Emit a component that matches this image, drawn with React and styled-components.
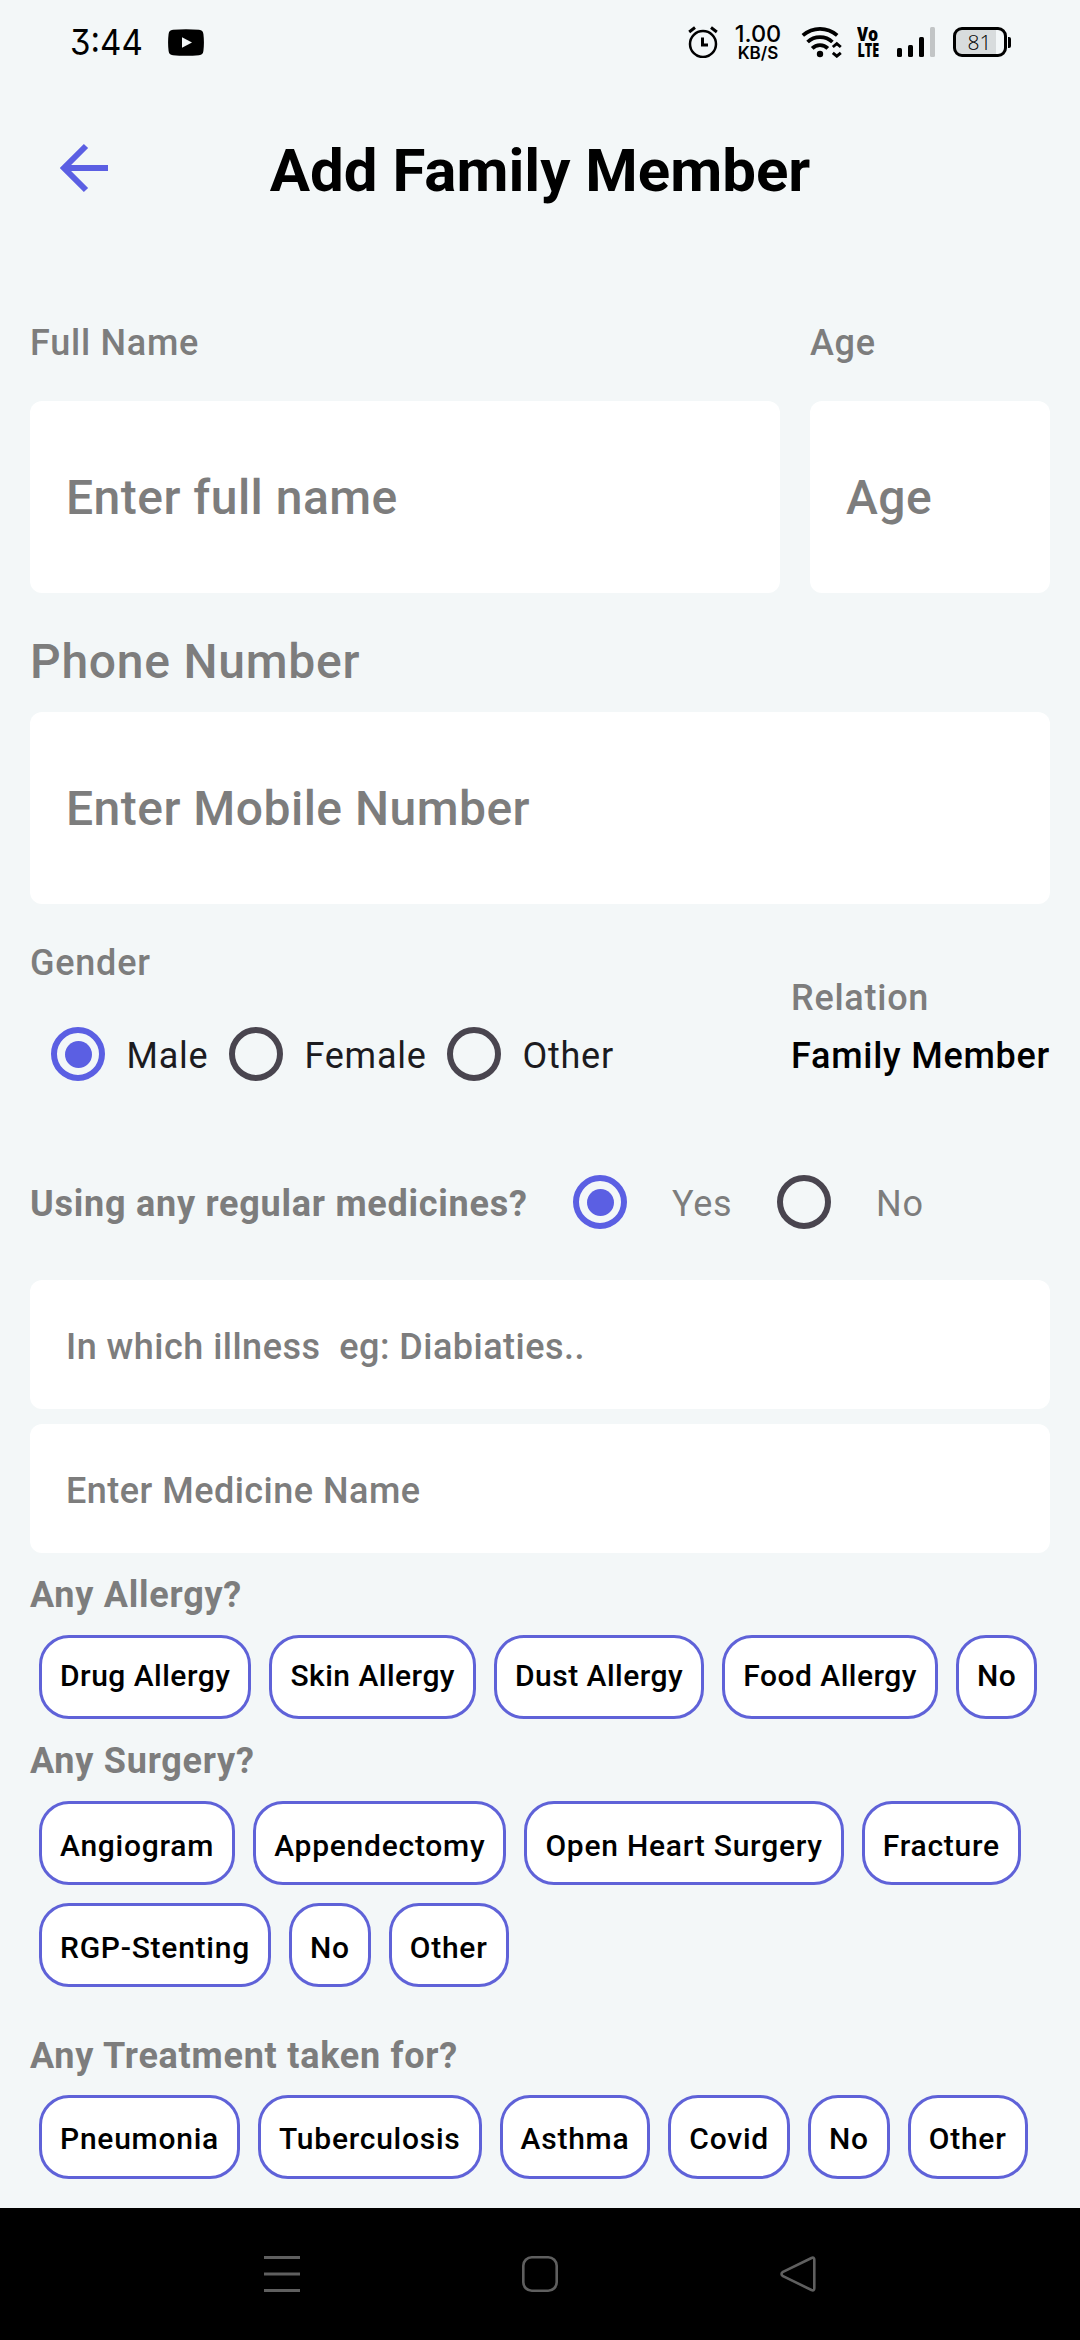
import React, { useState } from "react";
import styled, { createGlobalStyle } from "styled-components";

const ACCENT = "#5b5fe3";
const GREY = "#7d7d7d";

const Global = createGlobalStyle`
  *, *::before, *::after { box-sizing: border-box; }
  body { margin: 0; background: #f3f7f8; font-family: Roboto, "Noto Sans", sans-serif; }
  button, input { font: inherit; border: 0; padding: 0; margin: 0; background: none; }
`;

const Screen = styled.div`
  width: 1080px;
  height: 2340px;
  display: flex;
  flex-direction: column;
  background: #f3f7f8;
  overflow: hidden;
`;

const StatusBar = styled.header`
  height: 84px;
  flex: none;
  display: flex;
  justify-content: space-between;
  padding: 0 69px 0 70px;
`;
const StatusGroup = styled.div`
  display: flex;
  align-items: center;
`;
const Clock = styled.span`
  font: 400 36px/84px Inter, sans-serif;
  font-feature-settings: "cv09" 1;
  width: 98px;
  transform: scaleX(0.92);
  transform-origin: left;
`;
const Speed = styled.div`
  width: 50px;
  margin: 0 18px 0 15px;
  padding-top: 1px;
  display: flex;
  flex-direction: column;
  align-items: center;
  font: 550 23.5px/21px Inter, sans-serif;
  small { font: 600 17px/18px Inter, sans-serif; }
`;
const Volte = styled.div`
  width: 22px;
  margin: 0 18px 0 15px;
  display: flex;
  flex-direction: column;
  align-items: center;
  font: 800 19px/16px "Open Sans", sans-serif;
`;
const Squeeze = styled.span`
  transform: scaleX(${(p) => p.$x});
`;
const Battery = styled.div`
  display: flex;
  align-items: center;
  gap: 1px;
  margin-left: 18px;
  &::after {
    content: "";
    width: 3px;
    height: 11px;
    border-radius: 0 2px 2px 0;
    background: #000;
  }
`;
const BatteryShell = styled.div`
  width: 54px;
  height: 30px;
  border: 3px solid #000;
  border-radius: 9px;
  padding: 1px 1px 1px 0;
  background: linear-gradient(90deg, #d8dcdd 40px, transparent 40px);
  font: 350 21px/22px "Open Sans", sans-serif;
  text-align: center;
`;

const TopBar = styled.div`
  height: 170px;
  flex: none;
  display: grid;
  grid-template-columns: 1fr auto 1fr;
  align-items: center;
  padding: 0 57px;
`;
const BackButton = styled.button`
  width: 54px;
  height: 54px;
  margin-bottom: 2px;
  display: grid;
  place-items: center;
`;
const Title = styled.h1`
  margin: 0;
  padding-top: 3px;
  font-size: 60px;
  font-weight: 700;
  line-height: 70px;
`;

const Form = styled.main`
  flex: 1;
  padding: 63px 30px 0;
  display: flex;
  flex-direction: column;
`;
const Row = styled.div`
  display: flex;
  gap: 30px;
`;
const Field = styled.label`
  display: flex;
  flex-direction: column;
  flex: ${(p) => (p.$width ? "none" : "1")};
  width: ${(p) => (p.$width ? p.$width + "px" : "auto")};
`;
const Label = styled.span`
  color: ${GREY};
  font-size: ${(p) => (p.$large ? 48 : 36)}px;
  font-weight: ${(p) => (p.$bold ? 700 : 500)};
  line-height: ${(p) => (p.$large ? 56 : 42)}px;
  letter-spacing: 0.75px;
  margin-top: ${(p) => p.$top || 0}px;
  margin-bottom: ${(p) => p.$bottom || 0}px;
  white-space: nowrap;
`;
const Input = styled.input`
  width: 100%;
  height: ${(p) => (p.$compact ? 129 : 192)}px;
  margin-bottom: ${(p) => p.$bottom || 0}px;
  padding: ${(p) => (p.$compact ? "4px 36px 0" : "1px 36px 0")};
  border-radius: 12px;
  background: #fff;
  outline: none;
  font-size: ${(p) => (p.$compact ? 36 : 48)}px;
  font-weight: 500;
  letter-spacing: 0.48px;
  &::placeholder { color: ${GREY}; opacity: 1; }
`;

const GenderBlock = styled.div`
  display: flex;
  justify-content: space-between;
`;
const Column = styled.div`
  display: flex;
  flex-direction: column;
  width: ${(p) => (p.$width ? p.$width + "px" : "auto")};
`;
const RadioRow = styled.div`
  display: flex;
  align-items: center;
  height: 54px;
  padding-left: ${(p) => p.$inset || 0}px;
`;
const MedicineRow = styled.div`
  display: grid;
  grid-template-columns: 543px auto;
  justify-content: start;
  align-items: center;
  height: 54px;
  margin: 94px 0 51px;
`;
const RadioMark = styled.span`
  width: 54px;
  height: 54px;
  flex: none;
  border: 6px solid ${(p) => (p.$on ? ACCENT : "#49454f")};
  border-radius: 50%;
  display: grid;
  place-items: center;
  &::after {
    content: "";
    width: 27px;
    height: 27px;
    border-radius: 50%;
    background: ${(p) => (p.$on ? ACCENT : "transparent")};
  }
`;
const RadioOption = styled.button`
  display: flex;
  align-items: center;
  text-align: left;
  gap: ${(p) => p.$gap}px;
  width: ${(p) => p.$width}px;
  color: ${(p) => (p.$muted ? GREY : "#1c1b1f")};
  font-size: 36px;
  line-height: 42px;
  letter-spacing: 0.75px;
`;
const RadioText = styled.span`
  padding-top: 4px;
`;
const Relation = styled.span`
  font-size: 36px;
  font-weight: 500;
  line-height: 42px;
  letter-spacing: 0.75px;
  color: #000;
  margin-top: 16px;
  white-space: nowrap;
`;

const ChipGrid = styled.div`
  display: flex;
  flex-wrap: wrap;
  gap: 18px;
  padding-left: 9px;
  margin-right: -20px;
  letter-spacing: ${(p) => p.$tracking}px;
`;
const Chip = styled.button`
  height: 84px;
  padding: ${(p) => p.$pad};
  border: 3px solid #5f62d8;
  border-radius: 30px;
  background: #fff;
  color: #000;
  font-size: 30px;
  font-weight: 500;
  line-height: 35px;
  letter-spacing: inherit;
  white-space: nowrap;
`;

const NavBar = styled.nav`
  height: 132px;
  flex: none;
  background: #000;
  display: grid;
  grid-template-columns: repeat(3, 258px);
  justify-content: center;
  align-items: center;
  justify-items: center;
`;

function Radio({ on, label, ...rest }) {
  return (
    <RadioOption type="button" role="radio" aria-checked={on} {...rest}>
      <RadioMark $on={on} />
      <RadioText>{label}</RadioText>
    </RadioOption>
  );
}

function Chips({ items, pad, tracking = 0.75 }) {
  return (
    <ChipGrid $tracking={tracking}>
      {items.map((t) => (
        <Chip key={t} type="button" $pad={pad}>{t}</Chip>
      ))}
    </ChipGrid>
  );
}

const YoutubeIcon = () => (
  <svg width="36" height="27" viewBox="0 0 36 27">
    <path d="M5 .8C13 0 23 0 31 .8 34 1.100 35 2.500 35.400 5c.7 5.500.7 11.500 0 17-.4 2.500-1.400 3.900-4.400 4.200-8 .8-18 .8-26 0C2 25.900 1 24.500.6 22c-.7-5.500-.7-11.500 0-17C1 2.500 2 1.100 5 .8z" />
    <path d="M14 8.200v10.600l10-5.300z" fill="#f3f7f8" />
  </svg>
);
const AlarmIcon = () => (
  <svg width="30" height="32" viewBox="0 0 30 32" fill="none" stroke="#000">
    <circle cx="15" cy="18" r="13" strokeWidth="2.500" />
    <path d="M14.500 11.500v7.500H20" strokeWidth="3" />
    <path d="M1.200 6 7 1.500M28.800 6 23 1.500" strokeWidth="3" />
  </svg>
);
const WifiIcon = () => (
  <svg width="41" height="32" viewBox="0 0 41 32" fill="none" stroke="#000" strokeWidth="3.800">
    <path d="M1.800 9.400C12 .8 26 .8 36.200 9.400" />
    <path d="M6.600 16C13.500 9.400 24.500 9.400 31.400 16" />
    <path d="M11.200 22.400c4.200-4.300 11.400-4.300 15.600 0" />
    <circle cx="19" cy="28" r="3.200" fill="#000" stroke="none" />
    <path d="m31.800 21 4-3.400 4 3.400M31.800 26.800l4 3.400 4-3.400" strokeWidth="2.900" />
  </svg>
);
const SignalIcon = () => (
  <svg width="38" height="30" viewBox="0 0 38 30">
    <rect x="0" y="21" width="5" height="9" rx="1.500" />
    <rect x="11" y="18" width="5" height="12" rx="1.500" />
    <rect x="22" y="10" width="5" height="20" rx="1.500" />
    <rect x="33" y="0" width="5" height="30" rx="1.500" fill="#c2c5c6" />
  </svg>
);
const BackIcon = () => (
  <svg width="54" height="54" viewBox="0 0 54 54" fill="none" stroke={ACCENT} strokeWidth="6">
    <path d="M51 27H8M29 5 7 27l22 22" />
  </svg>
);

export default function App() {
  const [gender, setGender] = useState("Male");
  const [medicine, setMedicine] = useState("Yes");
  return (
    <>
      <Global />
      <Screen>
        <StatusBar>
          <StatusGroup>
            <Clock>3:44</Clock>
            <YoutubeIcon />
          </StatusGroup>
          <StatusGroup>
            <AlarmIcon />
            <Speed>1.00<small>KB/S</small></Speed>
            <WifiIcon />
            <Volte><Squeeze $x={0.84}>Vo</Squeeze><Squeeze $x={0.66}>LTE</Squeeze></Volte>
            <SignalIcon />
            <Battery><BatteryShell>81</BatteryShell></Battery>
          </StatusGroup>
        </StatusBar>
        <TopBar>
          <BackButton type="button" aria-label="Back"><BackIcon /></BackButton>
          <Title>Add Family Member</Title>
        </TopBar>
        <Form>
          <Row>
            <Field>
              <Label $top={5} $bottom={37}>Full Name</Label>
              <Input placeholder="Enter full name" />
            </Field>
            <Field $width={240}>
              <Label $top={5} $bottom={37}>Age</Label>
              <Input placeholder="Age" />
            </Field>
          </Row>
          <Field $width={1020}>
            <Label $large $top={41} $bottom={22}>Phone Number</Label>
            <Input placeholder="Enter Mobile Number" />
          </Field>
          <GenderBlock>
            <Column>
              <Label $top={38} $bottom={43}>Gender</Label>
              <RadioRow $inset={21} role="radiogroup">
                <Radio label="Male" $gap={21.5} $width={178} on={gender === "Male"} onClick={() => setGender("Male")} />
                <Radio label="Female" $gap={21.5} $width={218} on={gender === "Female"} onClick={() => setGender("Female")} />
                <Radio label="Other" $gap={21.5} $width={180} on={gender === "Other"} onClick={() => setGender("Other")} />
              </RadioRow>
            </Column>
            <Column $width={259}>
              <Label $top={73}>Relation</Label>
              <Relation>Family Member</Relation>
            </Column>
          </GenderBlock>
          <MedicineRow>
            <Label $bold $top={4}>Using any regular medicines?</Label>
            <RadioRow role="radiogroup">
              <Radio label="Yes" $muted $gap={45} $width={204} on={medicine === "Yes"} onClick={() => setMedicine("Yes")} />
              <Radio label="No" $muted $gap={45} $width={204} on={medicine === "No"} onClick={() => setMedicine("No")} />
            </RadioRow>
          </MedicineRow>
          <Input $compact $bottom={15} placeholder="In which illness  eg: Diabiaties.." />
          <Input $compact placeholder="Enter Medicine Name" />
          <Label $bold $top={21} $bottom={19}>Any Allergy?</Label>
          <Chips pad="0 18px 3px" tracking={0.48} items={["Drug Allergy", "Skin Allergy", "Dust Allergy", "Food Allergy", "No"]} />
          <Label $bold $top={21} $bottom={19}>Any Surgery?</Label>
          <Chips pad="5px 18px 0" items={["Angiogram", "Appendectomy", "Open Heart Surgery", "Fracture", "RGP-Stenting", "No", "Other"]} />
          <Label $bold $top={48} $bottom={18}>Any Treatment taken for?</Label>
          <Chips pad="3px 18px 0" items={["Pneumonia", "Tuberculosis", "Asthma", "Covid", "No", "Other"]} />
        </Form>
        <NavBar>
          <svg width="36" height="36" viewBox="0 0 36 36" stroke="#5f5f5f" strokeWidth="3">
            <path d="M0 1.500h36M0 18h36M0 34.500h36" />
          </svg>
          <svg width="36" height="36" viewBox="0 0 36 36" fill="none" stroke="#5f5f5f" strokeWidth="2.600">
            <rect x="1.300" y="1.300" width="33.400" height="33.400" rx="8.500" />
          </svg>
          <svg width="36" height="36" viewBox="0 0 36 36" fill="none" stroke="#5f5f5f" strokeWidth="2.600" strokeLinejoin="round">
            <path d="M31.500 2 3 15.800q-3 2.200 0 4.400L31.500 34q2.800 1.200 2.800-1.800V3.800q0-3-2.800-1.800z" />
          </svg>
        </NavBar>
      </Screen>
    </>
  );
}
